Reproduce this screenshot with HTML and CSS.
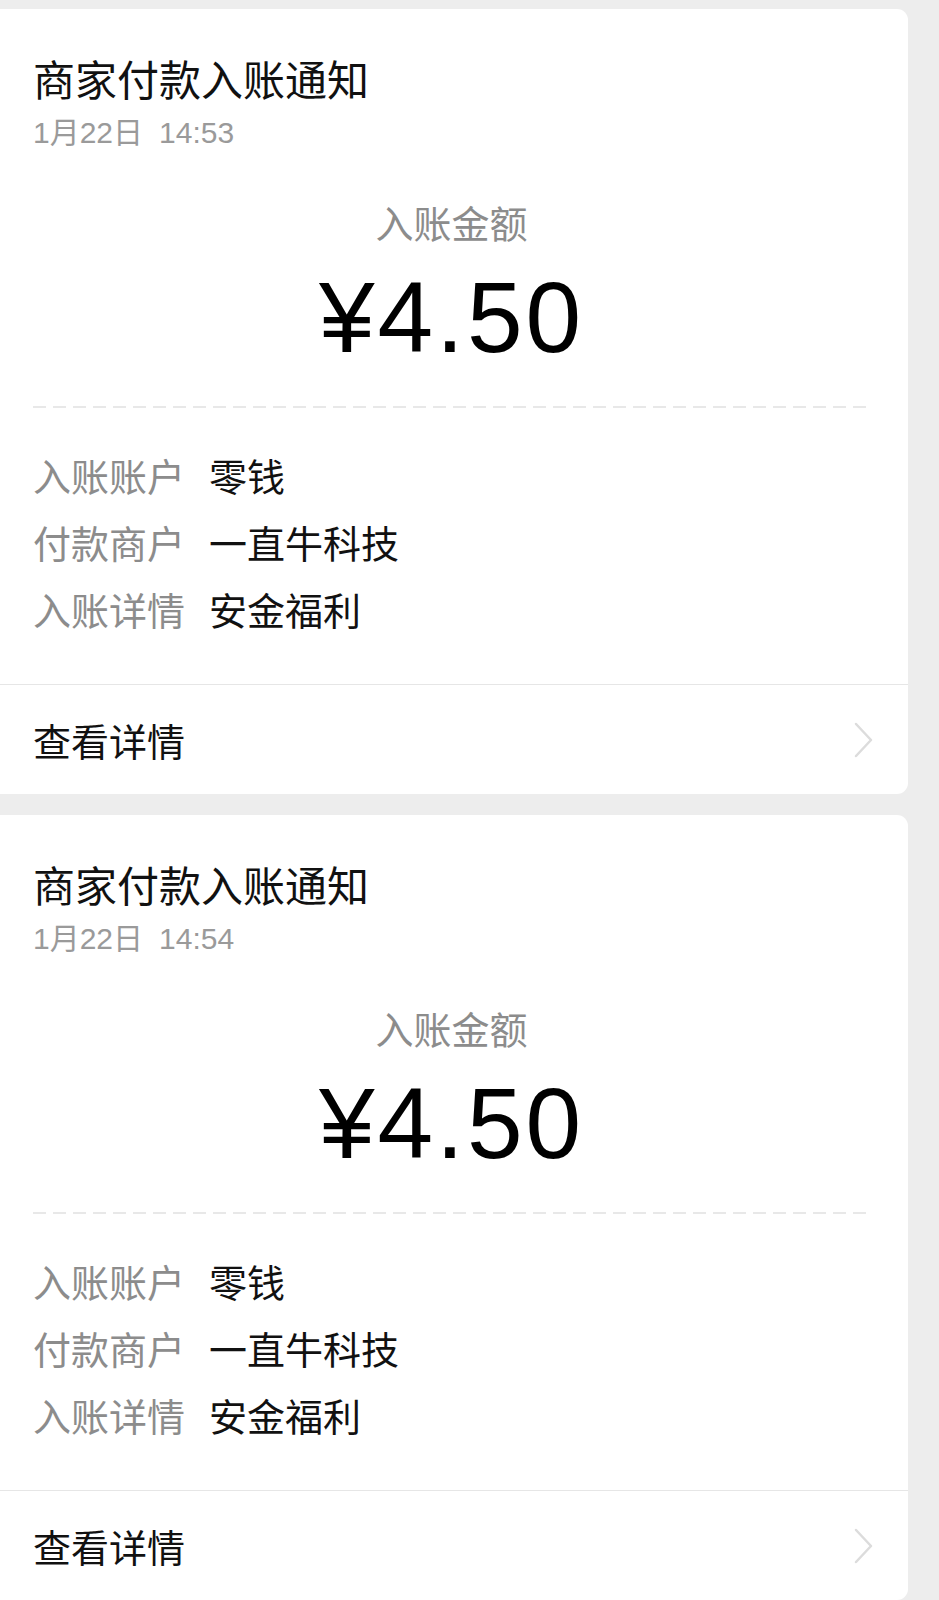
FILE: index.html
```
<!DOCTYPE html>
<html lang="zh-CN">
<head>
  <meta charset="UTF-8" />
  <meta name="viewport" content="width=device-width, initial-scale=1.0"/>
  <title>商家付款入账通知</title>
  <link rel="stylesheet" href="styles.css">
</head>
<body>

  <div class="card">
    <div class="card-body">
      <div class="title">商家付款入账通知</div>
      <div class="time">1月22日<span class="clock">14:53</span></div>
      <div class="amount-label">入账金额</div>
      <div class="amount">¥4.50</div>
      <div class="dashed"></div>
      <div class="row"><span class="key">入账账户</span><span class="val">零钱</span></div>
      <div class="row"><span class="key">付款商户</span><span class="val">一直牛科技</span></div>
      <div class="row"><span class="key">入账详情</span><span class="val">安金福利</span></div>
    </div>
    <div class="card-foot">
      <span>查看详情</span>
      <svg class="chevron" width="22" height="36" viewBox="0 0 22 36"><polyline points="3,2 18,18 3,34" /></svg>
    </div>
  </div>

  <div class="card">
    <div class="card-body">
      <div class="title">商家付款入账通知</div>
      <div class="time">1月22日<span class="clock">14:54</span></div>
      <div class="amount-label">入账金额</div>
      <div class="amount">¥4.50</div>
      <div class="dashed"></div>
      <div class="row"><span class="key">入账账户</span><span class="val">零钱</span></div>
      <div class="row"><span class="key">付款商户</span><span class="val">一直牛科技</span></div>
      <div class="row"><span class="key">入账详情</span><span class="val">安金福利</span></div>
    </div>
    <div class="card-foot">
      <span>查看详情</span>
      <svg class="chevron" width="22" height="36" viewBox="0 0 22 36"><polyline points="3,2 18,18 3,34" /></svg>
    </div>
  </div>

</body>
</html>
```

FILE: styles.css
```
body {
  margin: 0;
  padding-top: 9px;
  background: #ededed;
  color: #111;
  font-family: "Noto Sans CJK SC", "Liberation Sans", sans-serif;
}
.card {
  width: 908px;
  background: #fff;
  border-radius: 0 11px 11px 0;
  margin-bottom: 21px;
  overflow: hidden;
}
.card-body {
  padding: 44px 38px 42px 33px;
}
.title {
  font-size: 42px;
  line-height: 50px;
}
.time {
  margin-top: 12px;
  font-family: "Liberation Sans", "Noto Sans CJK SC", sans-serif;
  font-size: 30px;
  line-height: 36px;
  color: #9a9a9a;
}
.clock {
  margin-left: 16px;
}
.amount-label {
  margin-top: 48px;
  text-align: center;
  font-size: 38px;
  line-height: 46px;
  color: #8c8c8c;
}
.amount {
  margin-top: 17px;
  text-align: center;
  font-family: "Liberation Sans", sans-serif;
  font-size: 100px;
  line-height: 110px;
  letter-spacing: 3px;
  color: #000;
}
.dashed {
  margin-top: 34px;
  height: 2px;
  background: repeating-linear-gradient(90deg, #e8e8e8 0 13px, transparent 13px 20px);
  margin-bottom: 33px;
}
.row {
  display: flex;
  font-size: 38px;
  line-height: 67px;
}
.key {
  color: #8c8c8c;
  margin-right: 24px;
}
.val {
  color: #111;
}
.card-foot {
  display: flex;
  align-items: center;
  justify-content: space-between;
  height: 109px;
  padding: 0 33px 0 33px;
  border-top: 1px solid #e6e6e6;
  font-size: 38px;
}
.chevron polyline {
  fill: none;
  stroke: #dcdcdc;
  stroke-width: 2.5;
  stroke-linecap: round;
  stroke-linejoin: round;
}
```
